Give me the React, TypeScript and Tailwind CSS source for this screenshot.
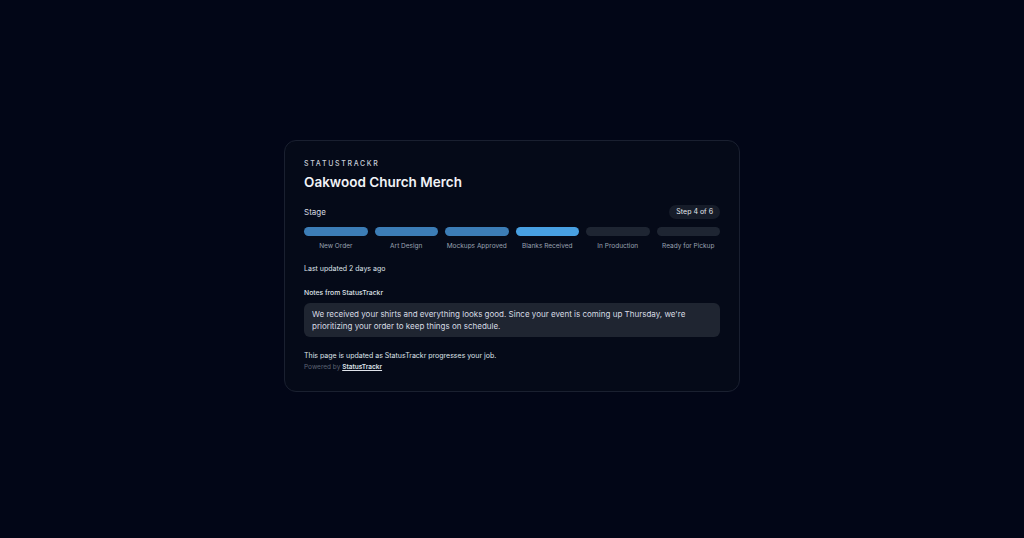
const stages = [
  { label: "New Order", state: "done" },
  { label: "Art Design", state: "done" },
  { label: "Mockups Approved", state: "done" },
  { label: "Blanks Received", state: "current" },
  { label: "In Production", state: "todo" },
  { label: "Ready for Pickup", state: "todo" },
];

export default function App() {
  return (
    <main
      className="flex min-h-screen items-center justify-center bg-[#020617] pb-[6px]"
      style={{ fontFamily: "Inter, 'Noto Sans', sans-serif" }}
    >
      <div className="w-[456px] rounded-xl border border-[#1a2030] bg-[#050a18] px-[19px] pt-[18px] pb-[19px]">
        <div className="text-[7px] leading-[10px] font-medium tracking-[0.24em] text-[#c9ced8]">STATUSTRACKR</div>
        <h1 className="mt-[4px] text-[13.5px] font-semibold leading-[18px] text-[#f1f3f7]">Oakwood Church Merch</h1>

        <div className="mt-[14px] flex h-[14px] items-center justify-between">
          <span className="text-[8px] leading-[10px] text-[#d5d9e0]">Stage</span>
          <span className="rounded-full bg-[#161c29] px-[7px] text-[7px] leading-[14px] text-[#e3e6ec]">Step 4 of 6</span>
        </div>

        <div className="mt-[8px] grid grid-cols-6 gap-[7px]">
          {stages.map((s) => (
            <div key={s.label} className="flex flex-col items-center">
              <div
                className={
                  "h-[9px] w-full rounded-full " +
                  (s.state === "done"
                    ? "bg-[#3c7db6]"
                    : s.state === "current"
                    ? "bg-[#48a0e2]"
                    : "bg-[#1e2532]")
                }
              />
              <span className="mt-[6px] text-[6.5px] leading-[9px] text-[#9aa2b1]">{s.label}</span>
            </div>
          ))}
        </div>

        <div className="mt-[13px] text-[7px] leading-[10px] text-[#dfe3ea]">Last updated 2 days ago</div>

        <div className="mt-[14px] text-[6.8px] leading-[10px] font-medium text-[#dfe3ea]">Notes from StatusTrackr</div>
        <div className="mt-[5px] rounded-md bg-[#1f2531] px-[8px] py-[5px] text-[8px] leading-[12px] text-[#d8dce4]">
          We received your shirts and everything looks good. Since your event is coming up Thursday, we're
          prioritizing your order to keep things on schedule.
        </div>

        <div className="mt-[14px] text-[7px] leading-[10px] text-[#dfe3ea]">This page is updated as StatusTrackr progresses your job.</div>
        <div className="mt-[2px] text-[6.5px] leading-[9px] text-[#5d6473]">
          Powered by <span className="font-semibold text-[#dfe3ea] underline">StatusTrackr</span>
        </div>
      </div>
    </main>
  );
}
